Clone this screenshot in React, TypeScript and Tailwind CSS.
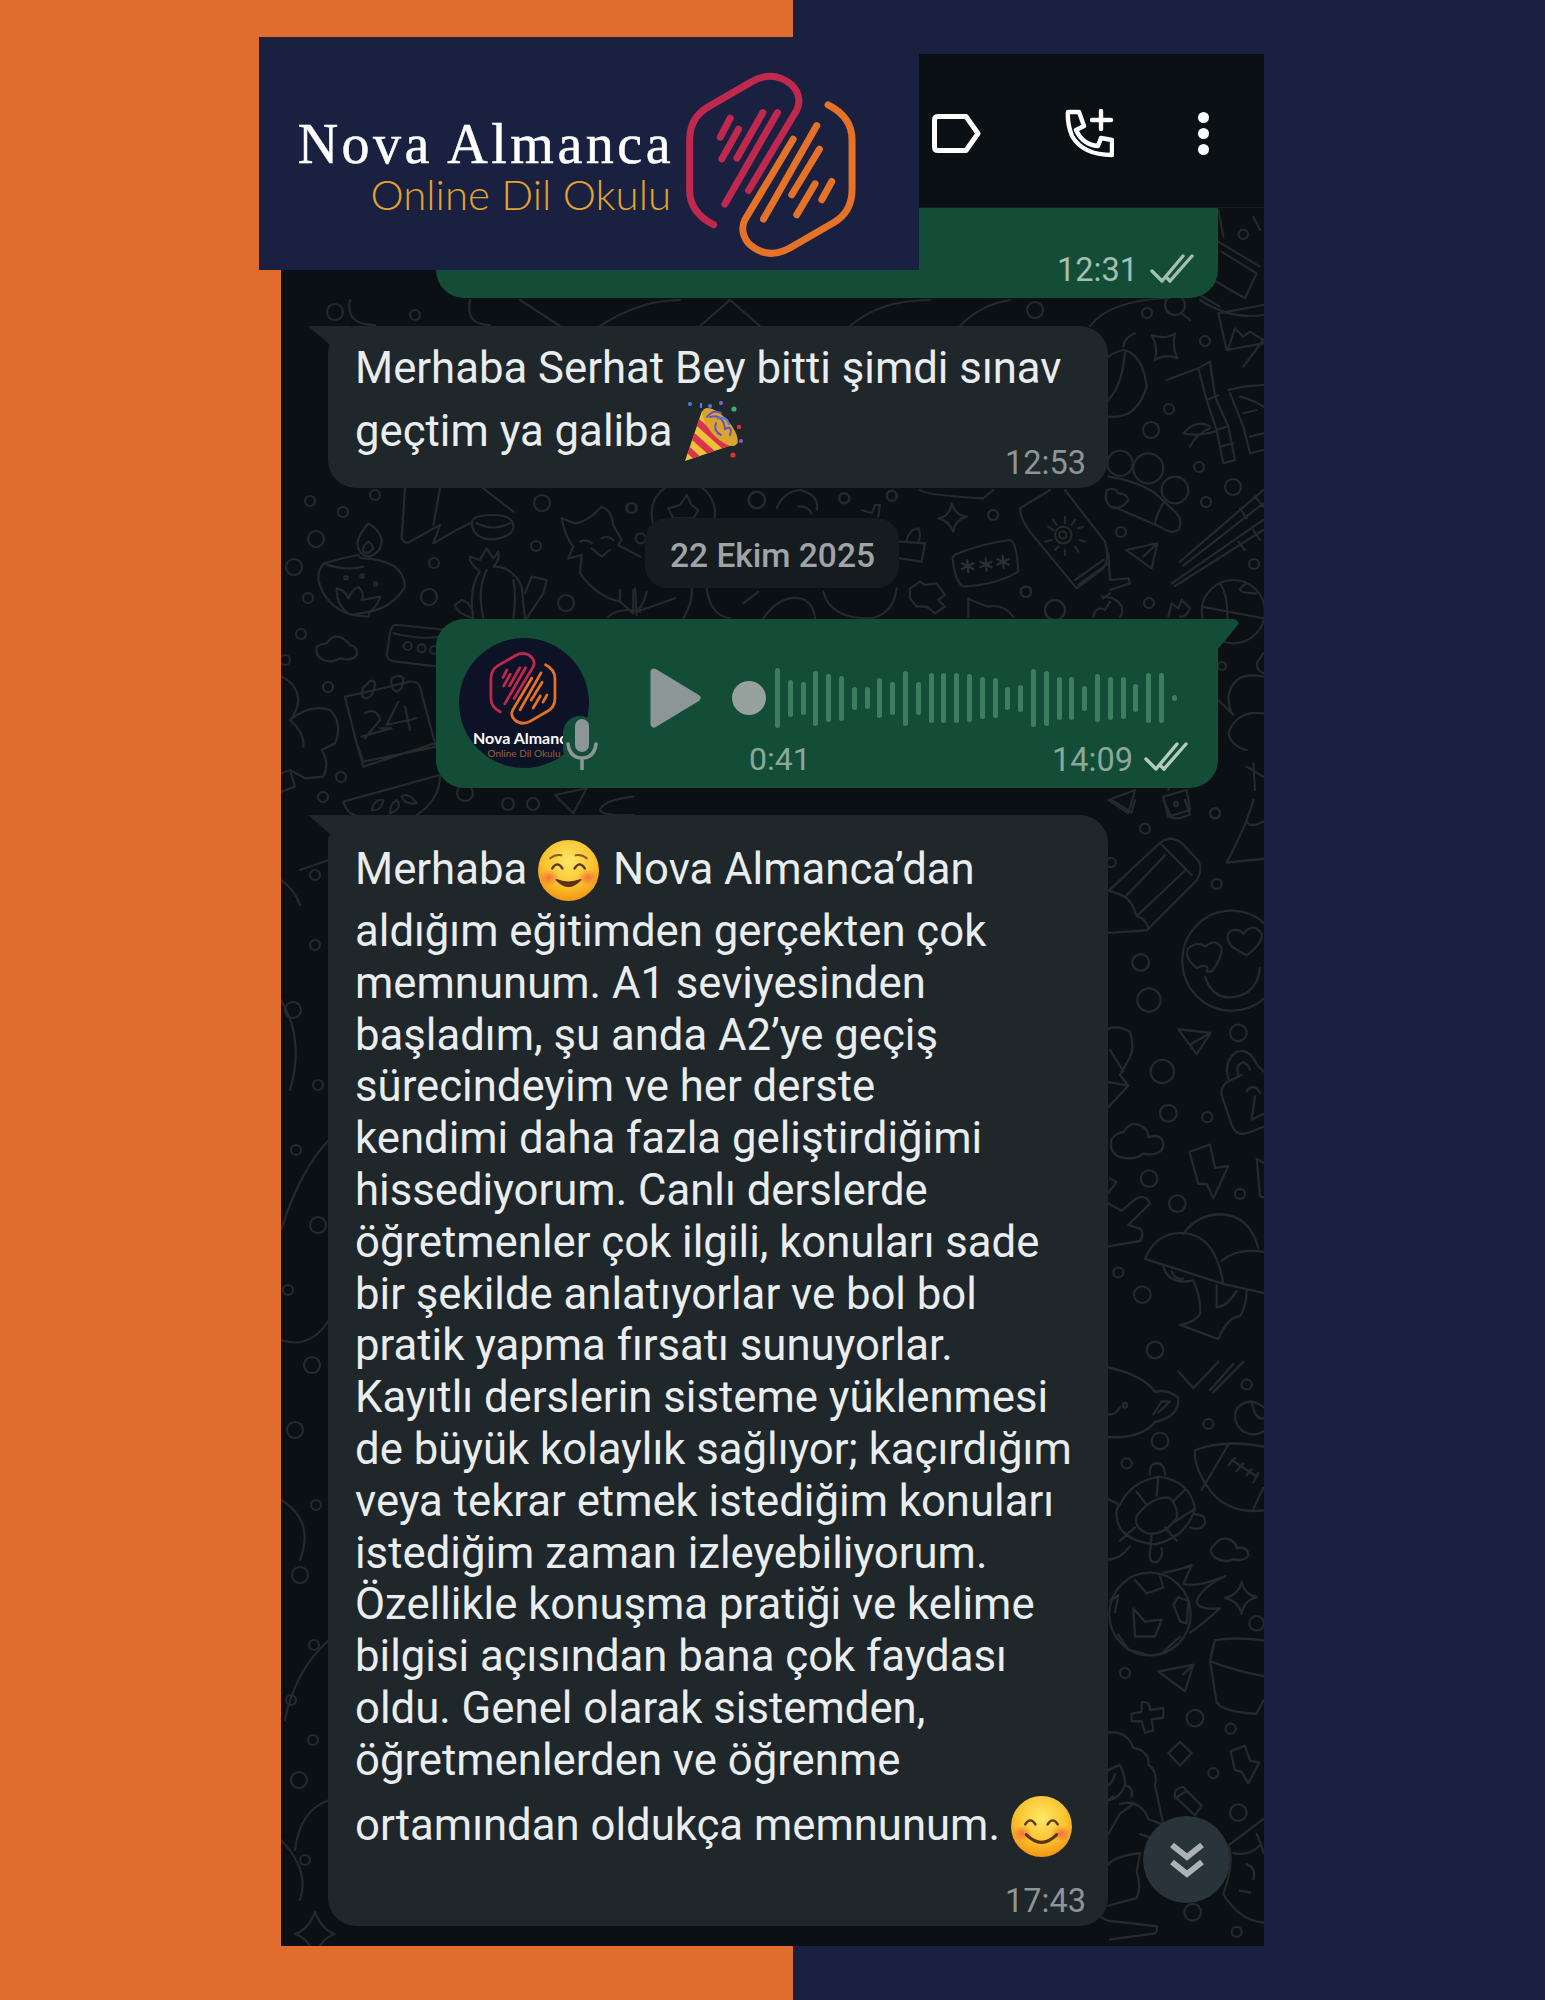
import React from "react";

function LogoMark({ className }: { className?: string }) {
  return (
    <svg viewBox="0 0 560 640" className={className} fill="none" strokeLinecap="round" strokeLinejoin="round" strokeWidth="21">
      <g stroke="#c0284e">
        <path d="M100 495C60 475 28 445 28 390L28 240C28 190 50 160 85 140L215 65C260 40 300 45 335 75C360 100 360 130 350 150L205 392" />
        <path d="M120 232L150 175M125 297L175 208M170 295L248 158M134 433L292 158" />
      </g>
      <g stroke="#e57227">
        <path d="M444 135C484 155 516 185 516 240L516 390C516 440 494 470 459 490L329 565C284 590 244 585 209 555C184 530 184 500 194 480L339 238" />
        <path d="M425 420L455 365M350 465L405 372M335 405L418 268M250 478L410 197" />
      </g>
    </svg>
  );
}

function Checks({ className }: { className?: string }) {
  return (
    <svg viewBox="0 0 44 30" className={className} fill="none" stroke="currentColor" strokeWidth="3.4" strokeLinecap="round" strokeLinejoin="round">
      <path d="M2 17L12 27L33 2" />
      <path d="M20 27L42 2" />
      <path d="M16 23L20 27" />
    </svg>
  );
}

// circles read from crops whose vertical scale differs
const z8: [number, number, number][] = [[135,80,15],[345,38,15],[350,235,15],[122,455,25],[147,560,35],[415,652,25],[187,760,35],[205,877,25],[322,888,15],[147,1060,25],[232,1130,25],[420,1103,15],[55,1323,15],[127,1385,25],[165,1540,25],[33,175,14]];
const z9: [number, number, number][] = [[440,65,15],[325,170,15],[180,215,25],[80,275,15],[75,832,15],[285,952,25],[392,980,15],[340,1098,15],[415,1203,25],[278,1468,25],[410,1520,15],[470,700,22]];

function Doodles() {
  const circles: [number, number, number][] = [
    ...z8.map(([x, y, r]): [number, number, number] => [1100 + x / 3, 800 + y / 2.8, r / 3]),
    ...z9.map(([x, y, r]): [number, number, number] => [1100 + x / 3, 1360 + y / 2.658, r / 3]),
    [310, 501, 5],[375, 495, 5],[343, 512, 5],[316, 539, 8],[294, 567, 8],[308, 598, 5],[434, 563, 5],[429, 597, 8],[301, 634, 5],[285, 660, 5],[328, 687, 5],[542, 503, 8],[631, 508, 5],[536, 546, 5],[566, 603, 8],[341, 777, 5],[323, 797, 5],[465, 793, 8],[508, 804, 6],[533, 804, 6],
    [315, 875, 5],[315, 945, 5],[293, 1010, 8],[318, 1085, 5],[296, 1150, 5],[318, 1225, 8],[288, 1290, 5],[312, 1365, 8],[295, 1430, 8],[316, 1505, 5],[300, 1575, 8],[314, 1645, 5],[291, 1700, 5],[313, 1740, 5],[299, 1780, 8],[305, 1860, 5],
    [335, 312, 8],[415, 315, 5],[1035, 310, 8],
    [1147, 313, 5],[1205, 341, 5],[1169, 409, 5],[1151, 430, 8],[1199, 467, 5],[1233, 487, 8],[1206, 502, 5],[1121, 532, 5],[1254, 564, 5],[1149, 603, 5],[1222, 666, 4],[1215, 813, 5],
    [757, 500, 8],[844, 498, 5],[892, 496, 5],[993, 515, 5],[1026, 592, 5],[1055, 610, 10],[632, 508, 5],
  ];
  return (
    <svg viewBox="281 208 983 1738" preserveAspectRatio="none" className="absolute inset-0 w-full h-full" fill="none" stroke="#25292c" strokeWidth="2.2" strokeLinecap="round" strokeLinejoin="round">
      {circles.map(([x, y, r], i) => (
        <circle key={i} cx={x} cy={y} r={r} />
      ))}
      {/* right column, pencil to hat */}
      <g transform="translate(1100 800) scale(.3333 .3571)" strokeWidth="6.5">
        <path d="M25 255L180 120Q215 95 250 125L295 170Q310 195 290 225L140 365L25 372M180 120L275 210M75 272L195 155M110 325L258 195M75 272Q95 280 110 325Q135 330 145 358M30 255Q65 265 75 272" />
        <ellipse cx="395" cy="450" rx="148" ry="140" />
        <path d="M320 480Q330 455 290 470Q250 440 265 415Q290 395 318 410Q345 385 365 415Q365 445 335 480ZM440 435Q420 425 395 410Q370 380 395 365Q420 360 430 375Q460 340 485 375Q490 400 440 435ZM315 495Q340 565 410 550Q470 540 480 470" />
        <path d="M235 642L332 652L290 712ZM270 685L332 652" />
        <path d="M425 770L380 790Q355 810 370 840L395 910Q410 945 450 930L490 915M385 780Q370 730 410 705Q450 695 470 740L490 760M415 770Q405 740 430 735Q445 740 450 755M465 830L455 895L490 880M440 815Q460 790 480 820" />
        <path d="M60 1000Q25 985 35 950Q50 930 70 930Q95 890 135 920Q145 930 145 945Q190 930 190 970Q180 1000 130 990Q105 1010 60 1000Z" />
        <path d="M268 985L330 965L345 1030L385 1025L340 1115L320 1075L295 1075Z" />
        <path d="M470 1005L490 1015M470 1005L480 1110L490 1112" />
        <path d="M135 1285Q165 1215 240 1212Q345 1210 370 1355ZM250 1215Q290 1160 365 1160Q450 1165 475 1255M365 1290Q410 1255 490 1265M370 1355L490 1380M190 1305Q205 1360 280 1345Q305 1400 300 1440Q280 1465 240 1470L355 1510Q380 1450 420 1445Q440 1420 440 1370M350 1360L350 1420Q380 1420 410 1375M215 1320Q225 1345 250 1340" />
        <path d="M25 1250L120 1235Q135 1215 120 1200L85 1190L150 1130Q140 1105 110 1115L65 1150L25 1130" />
        <path d="M25 640Q60 630 90 650Q105 690 90 720L60 770L85 800L25 860M30 700L70 760M25 790L85 800" />
        <path d="M30 1060L50 1070L25 1100" />
        <path d="M460 0Q440 70 380 175L490 165M440 60Q450 80 490 60M190 0L215 50Q240 55 270 40L255 0M35 0L95 35L105 0" />
      </g>
      {/* right column, lower */}
      <g transform="translate(1100 1360) scale(.3333 .3763)" strokeWidth="6.5">
        <path d="M25 20Q130 40 165 85Q200 75 235 100Q240 150 165 165Q120 210 25 205M175 140L210 110L185 110L160 145M25 145Q50 145 60 125" />
        <circle cx="75" cy="120" r="6" />
        <path d="M235 30L280 75L355 5M330 80L400 10M340 85L430 5" />
        <path d="M490 125Q445 95 410 130Q395 165 430 190Q460 205 490 190M490 155Q465 160 455 110" />
        <path d="M490 400Q380 410 325 340Q280 280 285 240Q370 210 490 230M385 225L305 345M490 340L460 395M395 265L470 310M385 280L405 260M410 295L430 275M440 305L455 290M460 325L475 300" />
        <path d="M150 305Q145 270 180 275Q195 285 195 305M60 385Q90 325 175 310Q270 320 285 395Q260 470 165 490Q60 480 50 420Q45 395 60 385ZM110 415Q150 365 205 365Q235 385 230 420Q190 470 140 460Q100 445 110 415ZM175 310L170 360M110 350L140 385M220 375L255 345M225 430L285 395M195 445L230 480M155 465L150 510M105 445L60 480M285 410Q320 410 315 435Q300 455 270 445M150 510Q145 545 175 535Q190 520 185 500M25 370L60 385M25 530Q60 530 90 495" />
        <path d="M345 525Q320 505 345 490Q365 465 395 480Q410 490 410 500Q445 495 445 520Q435 535 400 530Q375 540 345 525Z" />
        <ellipse cx="150" cy="675" rx="122" ry="110" />
        <path d="M105 585L140 620L190 605L180 575M100 660L135 695L185 690L165 735L105 735ZM30 640L55 625L45 670M220 650L235 630L265 640L260 700L240 695ZM55 730L85 770L130 780M185 780L240 735M190 565Q230 560 275 545L250 595Q290 605 375 575Q310 600 290 640Q290 665 360 660Q310 700 270 725" />
        <path d="M375 632Q415 625 425 590Q435 625 470 630Q430 640 425 675Q415 640 375 632Z" />
        <path d="M490 745Q400 735 345 745L330 800L350 910Q370 935 470 940L490 905M345 745Q335 770 330 800Q400 825 490 840" />
        <path d="M175 828L280 810L255 880ZM250 835L280 810" />
        <path d="M125 910Q150 905 150 930L190 925L190 950L155 955L160 985L135 990L125 960L95 960L95 940L125 935Z" />
        <path d="M240 1015L275 1045L240 1078L205 1045Z" />
        <path d="M392 1040L435 1025L450 1065L478 1070L445 1125L425 1095L405 1090Z" />
        <path d="M245 1135Q220 1140 225 1160L285 1210L305 1185L250 1135M225 1165L260 1145" />
        <path d="M25 990Q80 985 100 1030Q150 1040 145 1075Q175 1095 165 1130L190 1235L145 1220Q120 1165 60 1180M25 1090L60 1075Q75 1100 75 1130Q60 1165 25 1170M75 1130Q100 1135 95 1160M25 1130Q40 1120 45 1100M40 1160L25 1170M100 1180L60 1205L25 1260M120 1260L190 1280M25 1340Q40 1320 120 1310L110 1360Q125 1400 110 1430L25 1450M0 1480L25 1490L170 1505Q175 1525 155 1525L30 1540" />
        <path d="M490 1220L385 1290Q405 1330 370 1420Q420 1490 490 1495M440 1340Q470 1350 460 1380M420 1410L450 1415M400 1310Q445 1320 480 1290M470 1260Q490 1300 490 1310" />
      </g>
      {/* diya, cactus, fox, calendar */}
      <g transform="translate(280 480) scale(.3333)" strokeWidth="6.5">
        <path d="M375 25L365 175Q375 195 390 185L480 135L460 190L530 150L570 130M480 25L460 135M610 25L700 95M575 130Q575 105 640 105Q700 105 700 140Q700 170 640 178Q580 178 575 130ZM590 130Q640 155 690 130" />
        <path d="M235 225Q240 235 250 235Q300 235 345 260Q375 285 375 320Q340 380 270 395L265 410L215 405Q135 380 115 300Q115 260 135 250Q180 235 235 225ZM130 250Q190 275 250 260" />
        <path d="M265 130Q235 165 232 190Q235 225 265 230Q305 220 305 180Q300 150 265 130ZM265 185Q245 200 250 215Q265 225 280 205Q275 190 265 185Z" />
        <path d="M170 325Q195 330 205 355Q215 330 235 320Q255 340 245 360L300 350Q295 375 270 395L215 405Q170 385 170 325Z" />
        <circle cx="198" cy="293" r="5" /><circle cx="246" cy="288" r="5" /><circle cx="287" cy="312" r="5" />
        <path d="M595 270Q565 245 570 230L600 240L620 205L640 235L655 215Q660 240 640 260Q700 260 725 320L735 415M600 275Q565 325 580 415M620 270Q590 330 610 415M700 300Q710 350 700 415M735 340L755 290L800 300L790 340L740 415M580 415Q530 400 525 375L545 360Q570 365 580 400" />
        <path d="M845 115L885 130Q925 125 965 80Q995 90 1000 135L1025 180L1015 195L1080 230M845 115Q855 170 880 200L865 235L905 225L900 280Q950 350 1020 365L1060 400M935 205L965 230L990 210M900 185Q920 175 935 190M965 175Q985 165 1000 180M1020 365L1020 330M1060 330L1060 400M985 410Q1020 380 1080 395" />
        <path d="M130 540Q105 530 110 500Q125 490 140 490Q165 455 195 480Q210 490 210 495Q235 500 230 525Q215 545 180 535Q155 550 130 540Z" />
        <path d="M500 450L355 435Q335 430 330 460L320 525Q325 545 350 545L475 560M340 460Q420 480 485 470" />
        <circle cx="383" cy="498" r="12" /><circle cx="425" cy="505" r="12" /><circle cx="462" cy="510" r="12" />
        <path d="M5 590Q50 610 55 660Q50 700 30 720Q90 670 150 690Q190 730 165 790L125 810Q150 850 130 890L75 895L30 870L45 920L5 935M30 720Q75 760 70 800M5 880L30 870" />
        <path d="M195 650L240 640M285 630L390 605Q420 600 425 640L465 790L250 860L230 790L195 650ZM250 620Q240 650 255 655Q280 655 285 610Q275 590 255 620ZM335 595Q330 630 350 635Q370 630 370 595Q360 580 335 595ZM230 790L250 845L470 800L465 790M245 770L335 745L300 745M255 700Q290 680 300 720L255 775M355 665L320 735L410 715M375 680L390 750" />
        <path d="M190 965L480 885Q480 960 410 1005M190 965Q200 1000 225 1005" />
        <path d="M275 990Q285 955 310 960Q305 995 275 990ZM330 1000Q330 970 350 960Q370 985 330 1000ZM365 950Q385 935 410 970Q375 975 365 950Z" />
        <path d="M920 925L825 945L880 1000Z" />
        <path d="M1060 950Q970 960 960 990Q970 1010 1060 1005" />
      </g>
      {/* right column, upper */}
      <g transform="translate(1100 300) scale(.3333)" strokeWidth="6.5">
        <circle cx="225" cy="15" r="30" />
        <path d="M245 40L270 60" />
        <path d="M155 105Q195 120 225 100Q215 140 232 175Q195 160 165 180Q175 140 155 105Z" />
        <path d="M70 140Q75 110 105 100M25 350Q110 360 140 260Q130 170 75 150M25 170Q55 150 75 150M25 300Q70 250 75 150" />
        <path d="M200 240L295 205L330 185L345 290L385 380L405 480L370 490L350 390L320 300L295 205M320 300L355 285M350 390L385 378M360 440L400 430M330 380Q290 355 250 400Q290 410 345 395M270 440Q290 400 330 385" />
        <path d="M385 270L430 260L490 255M390 280L430 380L450 460L490 450M430 340L470 330M450 410L490 400M420 290Q460 300 490 320" />
        <path d="M355 40L490 15M355 40L380 150L490 130M385 145L405 85L430 110L450 95L490 120M430 200L490 120" />
        <circle cx="60" cy="490" r="38" /><circle cx="145" cy="505" r="45" /><circle cx="225" cy="570" r="40" />
        <path d="M25 530Q100 540 160 575L230 640Q250 665 235 690Q215 705 180 680L40 620M190 610Q170 640 165 670M20 570Q45 560 55 580Q80 580 85 600Q70 625 40 625Q10 610 20 570Z" />
        <path d="M78 750L172 730L155 805ZM130 770L172 730" />
        <path d="M240 785L490 570M250 797L490 610M215 850L490 660M225 858L490 690M420 625L440 655M465 590L490 620M415 725L435 750M460 690L480 720" />
        <circle cx="400" cy="935" r="95" />
        <path d="M305 920L490 955M360 850Q395 900 375 1020M440 850Q390 880 470 880" />
        <path d="M205 950L215 910L235 925L245 900L270 925Q260 950 240 950M25 760L30 840L85 835L90 850L30 870M5 890Q50 890 65 920Q70 940 60 950" />
        <path d="M490 1130Q400 1110 385 1190Q385 1225 400 1245M355 1200L400 1245M490 1240Q410 1230 385 1300Q395 1340 440 1350M440 1400L490 1430M460 1390L465 1470M490 1060L470 1090Q470 1110 490 1120" />
        <path d="M25 1500L105 1470L85 1540ZM190 1490L260 1470L270 1530L205 1550ZM205 1470L210 1455L230 1460" />
        <circle cx="228" cy="1512" r="6" />
      </g>
      {/* above the voice note, around the date */}
      <g transform="translate(630 485) scale(.3333)" strokeWidth="6.5">
        <circle cx="160" cy="85" r="95" />
        <path d="M115 70L150 60L170 30L185 60L205 75L190 100L130 100Z" />
        <path d="M440 70Q460 20 510 15Q570 30 560 75M505 65Q530 60 545 85" />
        <path d="M695 75L725 85L735 60L750 60L745 95" />
        <path d="M925 100Q960 95 965 55Q975 90 1010 95Q975 105 970 140Q955 105 925 100Z" />
        <path d="M810 170L885 175L875 230L810 220M830 165Q840 130 865 130Q875 150 865 170" />
        <path d="M985 205Q1060 175 1140 165Q1160 170 1165 260Q1100 300 1000 305Q975 290 968 220Q972 208 985 205Z" />
        <path d="M1012 225L1015 262M996 235L1030 252M996 252L1030 235M1067 220L1070 257M1051 230L1085 247M1051 247L1085 230M1118 212L1121 249M1102 222L1136 239M1102 239L1136 222" stroke="#2b2f32" />
        <path d="M1170 70L1260 15M1170 70Q1170 100 1200 140L1340 310L1420 250Q1440 220 1425 170L1305 15M1335 285L1420 225M1345 300L1435 235" />
        <circle cx="1300" cy="150" r="25" /><circle cx="1298" cy="150" r="11" />
        <path d="M1305 95L1305 115M1255 125L1270 135M1245 170L1265 165M1275 195L1285 185M1305 195L1305 210M1335 185L1345 200M1350 165L1365 170M1345 130L1360 125M1270 105L1280 120M1335 105L1325 120" />
        <path d="M840 310L870 290L885 300L920 295L945 330L925 345L945 365L915 385L890 365L860 365L840 340Z" />
        <path d="M1015 340Q1030 350 1075 365Q1120 355 1150 395M1015 340L1015 395" />
        <path d="M230 310Q240 390 300 400M580 320Q600 400 720 400Q790 390 800 310M400 400Q450 330 510 340Q550 350 555 400M15 310L20 390M50 320Q40 360 20 380L135 340M185 310Q190 350 160 400M340 355L385 320" />
        <path d="M870 15Q880 30 1060 40L1090 15" />
        <circle cx="1275" cy="375" r="30" /><circle cx="1188" cy="320" r="16" /><circle cx="643" cy="40" r="15" /><circle cx="785" cy="32" r="15" /><circle cx="1090" cy="90" r="15" /><circle cx="380" cy="45" r="25" /><circle cx="32" cy="160" r="15" />
        <path d="M1420 340L1440 325M1390 395Q1400 360 1425 375L1440 350" />
      </g>
      {/* top right corner and gap under the first bubble */}
      <g transform="translate(920 60) scale(.3333)" strokeWidth="6.5">
        <path d="M895 450L910 530M905 575L1010 640L975 715L880 660M1000 470L1020 510M895 545L1020 620M830 700L900 740" />
        <circle cx="970" cy="523" r="14" />
      </g>
      <path d="M350 300Q345 325 375 325M470 300Q465 325 490 325M520 300L560 326M600 326Q640 300 680 300M700 326L730 300L760 326M850 326Q880 300 930 300M960 326Q980 305 1010 300M1090 326Q1110 300 1170 298M1200 300Q1230 320 1264 315" />
      {/* left strip */}
      <path d="M281 1000Q305 1040 290 1090M329 1140Q300 1170 281 1230M281 1340Q310 1350 329 1320M281 1500Q315 1520 300 1560M329 1640Q295 1670 285 1720M329 1800Q300 1810 295 1850M315 1912Q322 1930 335 1934Q322 1938 315 1955Q308 1938 295 1934Q308 1930 315 1912ZM281 880Q295 890 300 905M329 860L300 870M281 1840Q310 1870 300 1900" />
    </svg>
  );
}

function SmileEmoji({ kind }: { kind: "blush" | "happy" }) {
  const id = kind === "blush" ? "ga" : "gb";
  return (
    <svg viewBox="0 0 60 60" className={`inline-block w-[61px] h-[61px] align-[-17px] ${kind === "blush" ? "mr-[3px]" : ""}`}>
      <defs>
        <radialGradient id={id} cx="50%" cy="35%" r="70%">
          <stop offset="0%" stopColor="#fde766" />
          <stop offset="55%" stopColor="#fbc531" />
          <stop offset="100%" stopColor="#ef8f10" />
        </radialGradient>
        <radialGradient id={id + "c"}>
          <stop offset="0%" stopColor="#f2603c" stopOpacity=".8" />
          <stop offset="100%" stopColor="#f2603c" stopOpacity="0" />
        </radialGradient>
      </defs>
      <circle cx="30" cy="30" r="30" fill={"url(#" + id + ")"} />
      <ellipse cx="11" cy="37" rx="10" ry="8" fill={"url(#" + id + "c)"} />
      <ellipse cx="49" cy="37" rx="10" ry="8" fill={"url(#" + id + "c)"} />
      <path d="M14 28Q19 20 24 28M36 28Q41 20 46 28" fill="none" stroke="#5b3a16" strokeWidth="2.4" strokeLinecap="round" />
      {kind === "blush" && <path d="M12 18Q17 14 23 15M37 15Q43 14 48 18" fill="none" stroke="#8a5a1c" strokeWidth="2" strokeLinecap="round" />}
      {kind === "blush" ? (
        <path d="M18 39Q30 52 42 39Q30 44 18 39Z" fill="#5b3216" stroke="#5b3216" strokeWidth="1.5" strokeLinejoin="round" />
      ) : (
        <path d="M15 38Q30 53 45 38" fill="none" stroke="#5b3216" strokeWidth="3" strokeLinecap="round" />
      )}
    </svg>
  );
}

function PartyEmoji() {
  return (
    <svg viewBox="0 0 63 62" className="inline-block w-[63px] h-[62px] align-[-17px]">
      <path d="M2 60L19 10Q40 14 55 42Z" fill="#f0c23a" />
      <path d="M4.5 52.5L6.8 46L16.8 55L10 57.3ZM9.1 39L11.5 32L31.7 50L24.3 52.4ZM13.9 25L16.3 18L46.5 44.9L39.1 47.4Z" fill="#d9334f" />
      <ellipse cx="37" cy="26" rx="10" ry="24" transform="rotate(-42 37 26)" fill="#d9a52a" />
      <path d="M27 16Q40 12 42 28Q50 24 47 34M33 22Q30 30 38 34M24 16Q30 8 38 12" fill="none" stroke="#6c4fd0" strokeWidth="2" strokeLinecap="round" />
      <path d="M34 18Q44 14 46 24" fill="none" stroke="#4f7fe0" strokeWidth="2" />
      <g fill="#4f7fe0"><circle cx="7" cy="3" r="2" /><circle cx="27" cy="5" r="2" /><rect x="17" y="2" width="2" height="5" /></g>
      <g fill="#3bb36b"><circle cx="51" cy="8" r="2.6" /></g>
      <g fill="#d33"><circle cx="50" cy="54" r="2.6" /><circle cx="56" cy="26" r="2.2" /></g>
      <g fill="#8c5ad8"><circle cx="38" cy="2" r="2" /><circle cx="58" cy="40" r="2" /></g>
    </svg>
  );
}

const textFont = "font-['Roboto',sans-serif]";
const wave = [60,37,33,55,48,45,23,22,40,33,55,33,50,50,50,48,42,40,23,27,58,55,43,43,25,48,43,42,28,50,50,6];

const lines: React.ReactNode[] = [
  <>Merhaba <SmileEmoji kind="blush" /> Nova Almanca’dan</>,
  "aldığım eğitimden gerçekten çok",
  "memnunum. A1 seviyesinden",
  "başladım, şu anda A2’ye geçiş",
  "sürecindeyim ve her derste",
  "kendimi daha fazla geliştirdiğimi",
  "hissediyorum. Canlı derslerde",
  "öğretmenler çok ilgili, konuları sade",
  "bir şekilde anlatıyorlar ve bol bol",
  "pratik yapma fırsatı sunuyorlar.",
  "Kayıtlı derslerin sisteme yüklenmesi",
  "de büyük kolaylık sağlıyor; kaçırdığım",
  "veya tekrar etmek istediğim konuları",
  "istediğim zaman izleyebiliyorum.",
  "Özellikle konuşma pratiği ve kelime",
  "bilgisi açısından bana çok faydası",
  "oldu. Genel olarak sistemden,",
  "öğretmenlerden ve öğrenme",
  <>ortamından oldukça memnunum. <SmileEmoji kind="happy" /></>,
];

export default function App() {
  return (
    <div className={`relative h-[2000px] overflow-hidden pt-[54px] pl-[281px] bg-[linear-gradient(90deg,#e06c2e_793px,#1a2140_793px)] ${textFont}`}>
      <div className="w-[983px] h-[1892px] flex flex-col bg-[#0b1014]">
        <header className="h-[154px] shrink-0 flex items-center justify-end gap-[84px] pr-[55px] pt-[5px] bg-[#0b1014] border-b border-[#161b1e]">
          <svg viewBox="0 0 49 39" className="w-[49px] h-[39px] ml-[1px]" fill="none" stroke="#fff" strokeWidth="5" strokeLinejoin="round">
            <path d="M6 2.5H34L46 19.5L34 36.5H6Q2.5 36.5 2.5 33V6Q2.5 2.5 6 2.5Z" />
          </svg>
          <svg viewBox="0 0 49 49" className="w-[49px] h-[49px]" fill="none" stroke="#fff" strokeWidth="4.4" strokeLinejoin="round" strokeLinecap="round">
            <path d="M3 3H14L19 17L11 21Q18 36 33 37L36 29L47 31V46Q18 46 7 27Q2 14 3 3Z" />
            <path d="M36 2V20M27 11H46" />
          </svg>
          <div className="flex flex-col gap-[5px]">
            <span className="w-[11px] h-[11px] rounded-full bg-white" />
            <span className="w-[11px] h-[11px] rounded-full bg-white" />
            <span className="w-[11px] h-[11px] rounded-full bg-white" />
          </div>
        </header>

        <main className="relative flex-1 flex flex-col overflow-hidden">
          <Doodles />

          {/* Outgoing text, top */}
          <div className="relative ml-[155px] w-[782px] h-[90px] bg-[#144d37] rounded-b-[28px] flex justify-end items-end gap-[12px] pr-[24px] pb-[8px] text-[32.5px] leading-[40px] text-[#a3bfb2]">
            <span>12:31</span>
            <Checks className="w-[44px] h-[30px] mb-[6px] text-[#a3bfb2]" />
          </div>

          {/* Incoming */}
          <div className="relative mt-[28px] ml-[47px] w-[780px] h-[162px] bg-[#1f272a] rounded-[28px] pl-[27px] pt-[16px] text-[43.7px] text-[#e9edef]">
            <span className="absolute left-[-20px] top-0 w-[42px] h-[36px] bg-[#1f272a] [clip-path:polygon(0_0,100%_0,100%_100%)]" />
            <div className="relative leading-[52px] whitespace-nowrap">Merhaba Serhat Bey bitti şimdi sınav</div>
            <div className="relative h-[52px] mt-[7px] leading-[52px] whitespace-nowrap">geçtim ya galiba <PartyEmoji /></div>
            <span className="absolute right-[22px] bottom-[5px] text-[32.5px] leading-[40px] text-[#8d9598]">12:53</span>
          </div>

          {/* Date */}
          <div className="relative mt-[30px] self-center ml-[-2px] w-[254px] h-[70px] flex items-center justify-center pt-[6px] pl-[2px] rounded-[22px] bg-[#161b1f] text-[33.5px] font-medium text-[#9fa4a7]">
            22 Ekim 2025
          </div>

          {/* Voice */}
          <div className="relative mt-[31px] ml-[155px] w-[782px] h-[169px] bg-[#144d37] rounded-[28px] rounded-tr-none flex items-start pl-[23px] pt-[19px]">
            <span className="absolute right-[-21px] top-0 w-[42px] h-[30px] rounded-tr-[6px] bg-[#144d37] [clip-path:polygon(0_0,100%_0,100%_15%,50%_100%,0_100%)]" />
            <div className="relative w-[130px] h-[130px] shrink-0 rounded-full bg-[#0d1226] overflow-hidden flex flex-col items-center pt-[9px]">
              <LogoMark className="w-[76px] h-[84px]" />
              <div className="font-['Lato',sans-serif] font-bold text-white text-[16px] leading-[18px] whitespace-nowrap mt-[-2px]">Nova Almanca</div>
              <div className="font-['Lato',sans-serif] text-[#94603e] text-[10px] leading-[12px] whitespace-nowrap">Online Dil Okulu</div>
            </div>
            <span className="absolute left-[127px] top-[97px] w-[34px] h-[50px] rounded-full bg-[#144d37]" />
            <svg viewBox="0 0 32 52" className="absolute left-[130px] top-[99px] w-[32px] h-[52px]" fill="none" stroke="#8d9696">
              <rect x="9" y="1" width="14" height="33" rx="7" fill="#8d9696" stroke="none" />
              <path d="M2 26Q4 40 16 40Q28 40 30 26M16 40V51" strokeWidth="3.6" strokeLinecap="round" />
            </svg>
            <svg viewBox="0 0 51 60" className="ml-[61px] mt-[30px] w-[51px] h-[60px] shrink-0" fill="#8d9696" stroke="#8d9696" strokeWidth="7" strokeLinejoin="round">
              <path d="M4 4L47 30L4 56Z" />
            </svg>
            <div className="flex-1 relative h-[130px]">
              <div className="ml-[31px] mt-[30px] h-[60px] flex items-center">
                <span className="w-[34px] h-[34px] rounded-full bg-[#97a19d] shrink-0" />
                <div className="ml-[9px] flex items-center gap-[7.8px]">
                  {wave.map((h, i) => (
                    <span key={i} className="w-[5px] rounded-full bg-[#3f7d63]" style={{ height: h }} />
                  ))}
                </div>
              </div>
              <div className="absolute left-[48px] top-[101px] text-[32px] leading-[40px] text-[#8aa89b]">0:41</div>
              <div className="absolute right-[30px] top-[102px] flex items-center gap-[11px] text-[32.5px] leading-[40px] text-[#8aa89b]">
                <span>14:09</span>
                <Checks className="w-[44px] h-[30px] mb-[6px] text-[#b4cbc0]" />
              </div>
            </div>
          </div>

          {/* Long incoming */}
          <div className="relative mt-[27px] ml-[47px] w-[780px] h-[1111px] bg-[#1f272a] rounded-[28px] pl-[27px] pt-[22px] text-[43.7px] text-[#e9edef]">
            <span className="absolute left-[-20px] top-0 w-[42px] h-[36px] bg-[#1f272a] [clip-path:polygon(0_0,100%_0,100%_100%)]" />
            {lines.map((l, i) => (
              <div
                key={i}
                className={`whitespace-nowrap ${i === 0 ? "h-[69px] leading-[64px]" : i === 18 ? "h-[64px] pt-[6px] leading-[64px]" : "h-[51.8px] leading-[51.8px]"}`}
              >
                {l}
              </div>
            ))}
            <span className="absolute right-[22px] bottom-[5px] text-[32.5px] leading-[40px] text-[#8d9598]">17:43</span>
          </div>

          <div className="absolute left-[862px] top-[1608px] w-[87px] h-[87px] rounded-full bg-[#29343a] flex items-center justify-center">
            <svg viewBox="0 0 34 36" className="w-[34px] h-[36px]" fill="none" stroke="#aeb2b4" strokeWidth="6" strokeLinejoin="miter">
              <path d="M2 3L17 15L32 3M2 20L17 32L32 20" />
            </svg>
          </div>
        </main>
      </div>

      {/* Logo banner */}
      <div className="absolute left-[259px] top-[37px] w-[660px] h-[233px] bg-[#1a2140] flex items-start">
        <div className="w-[412px] flex flex-col items-end pt-[79px]">
          <div className="font-['Liberation_Serif',serif] text-white text-[56px] leading-[56px] tracking-[3.5px] mr-[-3px] whitespace-nowrap [-webkit-text-stroke:0.5px_white]">Nova Almanca</div>
          <div className="font-['Lato',sans-serif] font-light text-[#e3a42f] text-[42px] leading-[40px] mt-[2px] whitespace-nowrap">Online Dil Okulu</div>
        </div>
        <LogoMark className="ml-[9px] mt-[23px] w-[187px] h-[213px]" />
      </div>
    </div>
  );
}
